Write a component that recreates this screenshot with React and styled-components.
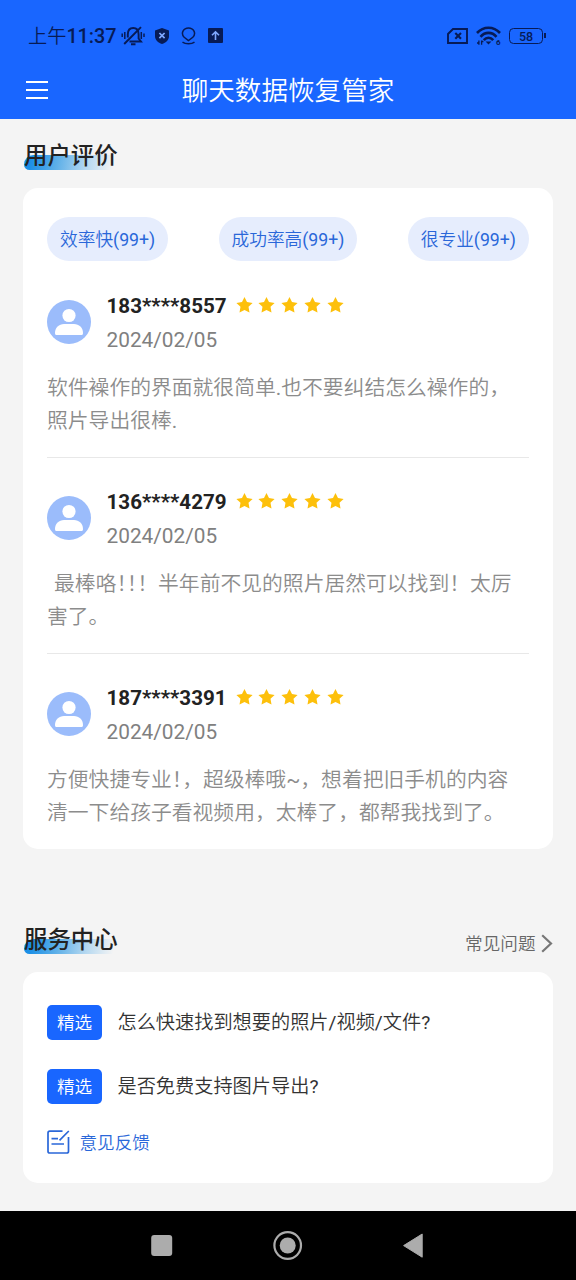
import React from 'react';
import styled, { createGlobalStyle } from 'styled-components';

const INK = '#071b56';

const reviews = [
  {
    phone: '183****8557',
    date: '2024/02/05',
    lines: ['软件襙作的界面就很简单.也不要纠结怎么襙作的，', '照片导出很棒.'],
  },
  {
    phone: '136****4279',
    date: '2024/02/05',
    indent: true,
    lines: [' 最棒咯！！！半年前不见的照片居然可以找到！太厉', '害了。'],
  },
  {
    phone: '187****3391',
    date: '2024/02/05',
    lines: ['方便快捷专业！，超级棒哦~，想着把旧手机的内容', '清一下给孩子看视频用，太棒了，都帮我找到了。'],
  },
];

const tags = ['效率快(99+)', '成功率高(99+)', '很专业(99+)'];

const questions = ['怎么快速找到想要的照片/视频/文件?', '是否免费支持图片导出?'];

// Latin runs get the regular weight, and a mark followed by another mark is set half width
const MixedText = ({ text }) =>
  text.split(/([!-~]+|！+(?=[！，]))/).map((part, i) => {
    if (/^[!-~]/.test(part)) return <Latin key={i}>{part}</Latin>;
    if (i % 2) return <Half key={i}>{part}</Half>;
    return part;
  });

const MuteIcon = () => (
  <svg width="24" height="20" viewBox="0 0 24 20" fill="none" stroke={INK} strokeWidth="1.9">
    <path d="M8.5 15.5H20L17.6 12.5V8.5C17.6 4.5 15.5 2 12.2 2S6.8 4.5 6.8 8.5V11.5" />
    <path d="M10 18.3H14.5M3.2 18L20 1.2" />
    <path d="M1.2 7.5V11M3.8 6V13M20.3 6V13M23 7.5V11" strokeWidth="1.5" />
  </svg>
);

const ShieldIcon = () => (
  <svg width="14" height="16" viewBox="0 0 14 16">
    <path d="M7 0L14 2.5V8C14 12 11 14.7 7 16C3 14.7 0 12 0 8V2.5Z" fill={INK} />
    <path d="M4.4 5L9.6 10.2M9.6 5L4.4 10.2" stroke="#7fa8ff" strokeWidth="1.7" />
  </svg>
);

const PinIcon = () => (
  <svg width="15" height="18" viewBox="0 0 15 18" fill="none" stroke={INK} strokeWidth="1.5">
    <path d="M7.5 13.6L3.2 10.3C-0.6 6.4 2.4 1 7.5 1S15.6 6.4 11.8 10.3Z" />
    <path d="M1.5 15.2C4.5 17.4 10.5 17.4 13.5 15.2" />
  </svg>
);

const UploadIcon = () => (
  <svg width="15" height="15" viewBox="0 0 15 15">
    <rect width="15" height="15" rx="1" fill={INK} />
    <path d="M7.5 12V4M4 7.3L7.5 3.8L11 7.3" fill="none" stroke="#7fa8ff" strokeWidth="1.6" />
  </svg>
);

const SimIcon = () => (
  <svg width="21" height="16" viewBox="0 0 21 16" fill="none" stroke={INK} strokeWidth="1.9">
    <path d="M6 1H20V15H1V6Z" />
    <path d="M8.3 5L14 10.8M14 5L8.3 10.8" strokeWidth="2.1" />
  </svg>
);

const WifiIcon = () => (
  <svg width="25" height="20" viewBox="0 0 25 20" fill="none" stroke={INK}>
    <path d="M1 7C7.5 0 17.5 0 24 7" strokeWidth="2.6" />
    <path d="M4.5 10.8C9 5.6 16 5.6 20.5 10.8" strokeWidth="2.6" />
    <path d="M7.8 14.2C10.5 11 14.5 11 17.2 14.2" strokeWidth="2.6" />
    <path d="M9.6 15.4H15.4L12.5 18.5Z" fill={INK} stroke="none" />
    <path d="M2.9 14.5V18.8M1 17H3.4M5.6 18.8V14.5M5.6 15.5H7.4" strokeWidth="1.3" />
    <text x="20" y="19" fontSize="8" fontWeight="700" fontFamily="Roboto" fill={INK} stroke="none">6</text>
  </svg>
);

const Star = () => (
  <svg width="17" height="16" viewBox="0 0 17 16">
    <path d="M8.5 0L11 5.1L16.6 5.9L12.5 9.8L13.5 15.6L8.5 12.9L3.5 15.6L4.5 9.8L0.4 5.9L6 5.1Z" fill="#fdc00b" />
  </svg>
);

const UserIcon = () => (
  <svg width="44" height="44" viewBox="0 0 44 44">
    <circle cx="22" cy="22" r="22" fill="#9bbcfb" />
    <circle cx="22" cy="15.5" r="6.6" fill="#fff" />
    <path d="M8 33C8 27.5 12 24 17 24H27C32 24 36 27.5 36 33C36 34.4 35.4 35 34.5 35H9.5C8.6 35 8 34.4 8 33Z" fill="#fff" />
  </svg>
);

const FeedbackIcon = () => (
  <svg width="23" height="24" viewBox="0 0 23 24" fill="none" stroke="#2a67d9" strokeWidth="1.7">
    <path d="M15.5 1.2H2.8Q1 1.2 1 3V21.2Q1 23 2.8 23H19.7Q21.5 23 21.5 21.2V7" />
    <path d="M21.8 1L12.5 10.3M4.5 8.6H11M4.5 14H17" />
  </svg>
);

const App = () => (
  <Page>
    <GlobalStyle />
    <Header>
      <StatusBar>
        <Clock>上午<b>11:37</b></Clock>
        <StatusIcons>
          <MuteIcon />
          <ShieldIcon />
          <PinIcon />
          <UploadIcon />
        </StatusIcons>
        <SystemIcons>
          <SimIcon />
          <WifiIcon />
          <Battery><span>58</span></Battery>
        </SystemIcons>
      </StatusBar>
      <TitleBar>
        <MenuButton aria-label="menu">
          <i />
          <i />
          <i />
        </MenuButton>
        <h1>聊天数据恢复管家</h1>
      </TitleBar>
    </Header>

    <Main>
      <SectionHead>
        <Heading><span>用户评价</span></Heading>
      </SectionHead>
      <ReviewCard>
        <Tags>
          {tags.map((tag) => (
            <Tag key={tag}><MixedText text={tag} /></Tag>
          ))}
        </Tags>
        {reviews.map((review) => (
          <Review key={review.phone}>
            <ReviewHead>
              <UserIcon />
              <div>
                <NameRow>
                  <Name>{review.phone}</Name>
                  <Stars>
                    {[1, 2, 3, 4, 5].map((n) => (
                      <Star key={n} />
                    ))}
                  </Stars>
                </NameRow>
                <ReviewDate>{review.date}</ReviewDate>
              </div>
            </ReviewHead>
            <Comment $indent={review.indent}>
              {review.lines.map((line) => (
                <p key={line}><MixedText text={line} /></p>
              ))}
            </Comment>
          </Review>
        ))}
      </ReviewCard>

      <SectionHead $second>
        <Heading><span>服务中心</span></Heading>
        <MoreLink>
          常见问题
          <svg width="12" height="20" viewBox="0 0 12 20" fill="none" stroke="#777" strokeWidth="2.2">
            <path d="M1.2 1.2L10 9.5L1.2 17.8" />
          </svg>
        </MoreLink>
      </SectionHead>
      <ServiceCard>
        {questions.map((question) => (
          <Question key={question}>
            <Badge>精选</Badge>
            <span><MixedText text={question} /></span>
          </Question>
        ))}
        <Feedback>
          <FeedbackIcon />
          <span>意见反馈</span>
        </Feedback>
      </ServiceCard>
    </Main>

    <NavBar>
      <svg width="22" height="22" viewBox="0 0 22 22">
        <rect x="0.2" y="0" width="21" height="21" rx="3" fill="#acacac" />
      </svg>
      <svg width="30" height="30" viewBox="0 0 30 30">
        <circle cx="14.7" cy="14.5" r="13.3" fill="none" stroke="#acacac" strokeWidth="2.2" />
        <circle cx="14.7" cy="14.5" r="8" fill="#acacac" />
      </svg>
      <svg width="21" height="26" viewBox="0 0 21 26">
        <path d="M0.6 12.6L19.2 1V24.2Z" fill="#acacac" stroke="#acacac" strokeLinejoin="round" />
      </svg>
    </NavBar>
  </Page>
);

const GlobalStyle = createGlobalStyle`
  * {
    box-sizing: border-box;
    margin: 0;
    padding: 0;
  }

  body {
    background: #f4f4f4;
    font-family: Roboto, "Noto Sans CJK SC", sans-serif;
    font-weight: 350;
  }

  svg {
    display: block;
    flex-shrink: 0;
  }
`;

const Page = styled.div`
  width: 576px;
  height: 1280px;
  display: flex;
  flex-direction: column;
  overflow: hidden;
  background: #f4f4f4;
`;

const Latin = styled.span`
  font-weight: 400;
`;

const Half = styled.span`
  font-feature-settings: 'halt';
`;

const Header = styled.header`
  height: 119px;
  background: #1966ff;
`;

const StatusBar = styled.div`
  height: 60px;
  padding: 11px 30px 0 28px;
  display: flex;
  align-items: center;
  color: ${INK};
`;

const Clock = styled.div`
  width: 93px;
  padding-top: 3px;
  font-size: 19.2px;
  line-height: 24px;
  white-space: nowrap;

  b {
    font-size: 19.8px;
    font-weight: 500;
  }
`;

const StatusIcons = styled.div`
  display: flex;
  align-items: center;

  svg:nth-child(2) {
    margin-left: 10px;
  }

  svg:nth-child(3) {
    margin-left: 12px;
  }

  svg:nth-child(4) {
    margin-left: 12px;
  }
`;

const SystemIcons = styled.div`
  margin-left: auto;
  display: flex;
  align-items: center;
  gap: 8px;
`;

const Battery = styled.div`
  display: flex;
  align-items: center;

  span {
    width: 34px;
    height: 16px;
    border: 1.6px solid ${INK};
    border-radius: 4.5px;
    font-size: 12.5px;
    font-weight: 500;
    line-height: 15px;
    text-align: center;
  }

  &::after {
    content: '';
    width: 2px;
    height: 5px;
    margin-left: 1px;
    background: ${INK};
  }
`;

const TitleBar = styled.div`
  height: 59px;
  padding: 0 26px;
  display: grid;
  grid-template-columns: 22px 1fr 22px;
  align-items: center;

  h1 {
    padding-top: 2px;
    color: #fff;
    font-size: 26.6px;
    font-weight: 350;
    line-height: 36px;
    text-align: center;
  }
`;

const MenuButton = styled.button`
  border: none;
  background: none;
  display: flex;
  flex-direction: column;
  gap: 6px;

  i {
    width: 22px;
    height: 2px;
    background: #fff;
  }
`;

const Main = styled.main`
  height: 1092px;
  padding: 0 23px;
`;

const SectionHead = styled.div`
  height: ${({ $second }) => ($second ? '123px' : '69px')};
  padding-bottom: 18px;
  display: flex;
  justify-content: space-between;
  align-items: flex-end;
`;

const Heading = styled.h2`
  height: 31px;
  padding: 2px 0 0 1px;
  display: grid;
  grid-template-rows: 31px;
  font-size: 23.4px;
  font-weight: 500;
  line-height: 31px;
  color: #222;

  /* highlight bar under the text */
  &::before {
    content: '';
    grid-area: 1 / 1;
    align-self: end;
    width: 89px;
    height: 15px;
    margin-bottom: 2px;
    border-radius: 12px 0 0 7px;
    background: linear-gradient(100deg, #1b8fe6 8%, #5fb0e8 38%, #b5d8f0 70%, rgba(225, 238, 247, 0));
  }

  span {
    grid-area: 1 / 1;
  }
`;

const MoreLink = styled.a`
  height: 24px;
  margin-bottom: -2px;
  display: flex;
  align-items: center;
  gap: 5.5px;
  font-size: 17.6px;
  line-height: 24px;
  color: #666;
`;

const Card = styled.section`
  padding: 0 24px;
  background: #fff;
  border-radius: 15px;
`;

const ReviewCard = styled(Card)`
  height: 661px;
  padding-top: 29px;
`;

const Tags = styled.div`
  display: flex;
  justify-content: space-between;
  margin-bottom: 1px;
`;

const Tag = styled.span`
  height: 44px;
  padding: 0 13px;
  border-radius: 22px;
  background: #e6edfd;
  color: #2a67d9;
  font-size: 17.7px;
  line-height: 46px;
`;

const Review = styled.article`
  padding: 27px 0 20px;
  border-bottom: 1px solid #e8e8e8;

  &:last-child {
    border-bottom: none;
  }
`;

const ReviewHead = styled.div`
  height: 68px;
  display: flex;
  align-items: center;
  gap: 15.5px;
  line-height: 34px;

  > svg {
    margin-bottom: 2px;
  }
`;

const NameRow = styled.div`
  height: 34px;
  display: flex;
  align-items: center;
`;

const Name = styled.strong`
  width: 129px;
  font-size: 20.6px;
  font-weight: 700;
  color: #222;
`;

const Stars = styled.div`
  display: flex;
  gap: 5.8px;
  padding-bottom: 3px;
`;

const ReviewDate = styled.div`
  font-size: 20.8px;
  font-weight: 400;
  color: #808080;
`;

const Comment = styled.div`
  margin-top: 14px;
  font-size: 20.8px;
  line-height: 35px;
  color: #8c8c8c;

  p {
    height: 33px;
    white-space: pre;
  }

  p:first-child {
    text-indent: ${({ $indent }) => ($indent ? '2px' : '0')};
  }
`;

const ServiceCard = styled(Card)`
  height: 211px;
  padding-top: 33px;
`;

const Question = styled.div`
  height: 35px;
  margin-bottom: 29px;
  display: flex;
  align-items: center;
  gap: 15.5px;
  font-size: 19.2px;
  line-height: 35px;
  color: #333;
`;

const Badge = styled.span`
  width: 55px;
  height: 35px;
  border-radius: 5px;
  background: #1966ff;
  color: #fff;
  font-size: 17.6px;
  line-height: 37px;
  text-align: center;
`;

const Feedback = styled.div`
  height: 24px;
  margin-top: -3px;
  display: flex;
  align-items: center;
  gap: 9.5px;
  font-size: 17.6px;
  line-height: 24px;
  color: #2a67d9;

  span {
    padding-top: 2px;
  }
`;

const NavBar = styled.nav`
  height: 69px;
  padding: 0 152px 0 151px;
  display: flex;
  justify-content: space-between;
  align-items: center;
  background: #000;
`;

export default App;
